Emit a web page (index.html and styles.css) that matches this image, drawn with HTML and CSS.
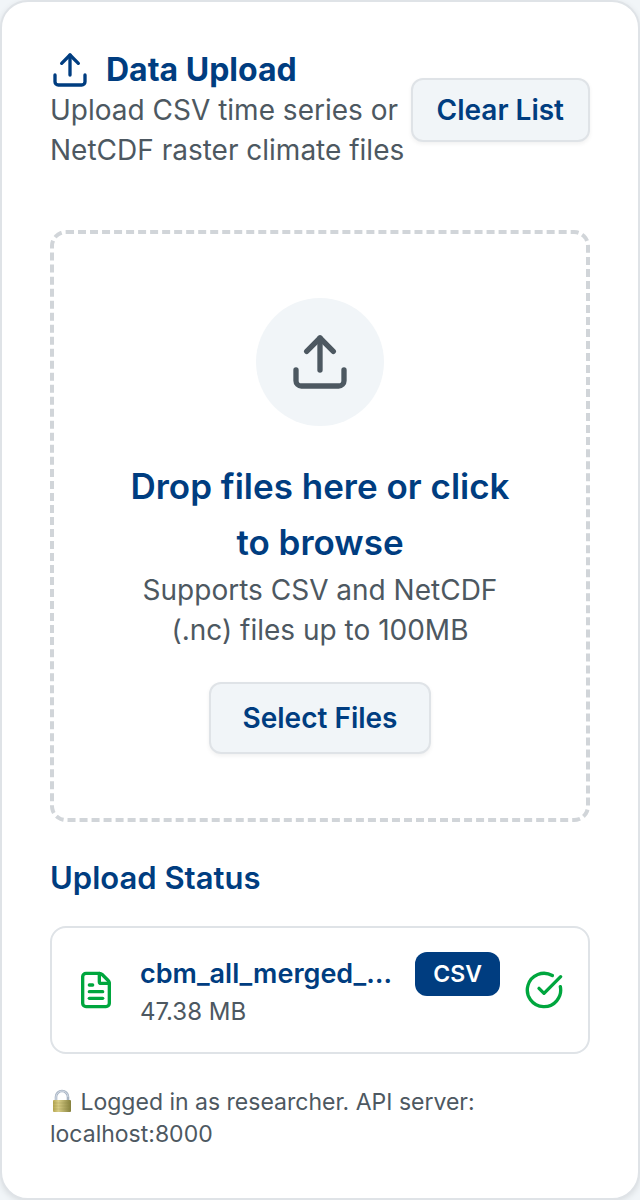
FILE: index.html
```html
<!DOCTYPE html>
<html lang="en">
<head>
<meta charset="utf-8">
<meta name="viewport" content="width=device-width, initial-scale=1">
<title>Data Upload</title>
<link rel="stylesheet" href="styles.css">
</head>
<body>
<main class="card">
  <header class="header">
    <div class="intro">
      <h1 class="title">
        <svg class="icon" viewBox="0 0 24 24" aria-hidden="true"><path d="M12 3v12"/><path d="m17 8-5-5-5 5"/><path d="M21 15v4a2 2 0 0 1-2 2H5a2 2 0 0 1-2-2v-4"/></svg>
        Data Upload
      </h1>
      <p class="text">Upload CSV time series or NetCDF raster climate files</p>
    </div>
    <button class="button" type="button">Clear List</button>
  </header>

  <section class="dropzone">
    <div class="dropzone-icon">
      <svg class="icon icon-large" viewBox="0 0 24 24" aria-hidden="true"><path d="M12 3v12"/><path d="m17 8-5-5-5 5"/><path d="M21 15v4a2 2 0 0 1-2 2H5a2 2 0 0 1-2-2v-4"/></svg>
    </div>
    <h2 class="dropzone-title">Drop files here or click to browse</h2>
    <p class="text dropzone-text">Supports CSV and NetCDF (.nc) files up to 100MB</p>
    <button class="button button-large" type="button">Select Files</button>
  </section>

  <section class="status">
    <h2 class="status-title">Upload Status</h2>
    <ul class="files">
      <li class="file">
        <svg class="icon icon-success" viewBox="0 0 24 24" aria-hidden="true"><path d="M6 22a2 2 0 0 1-2-2V4a2 2 0 0 1 2-2h8a2.4 2.4 0 0 1 1.704.706l3.588 3.588A2.4 2.4 0 0 1 20 8v12a2 2 0 0 1-2 2z"/><path d="M14 2v5a1 1 0 0 0 1 1h5"/><path d="M10 9H8"/><path d="M16 13H8"/><path d="M16 17H8"/></svg>
        <div class="file-info">
          <div class="file-row">
            <span class="file-name">cbm_all_merged_climate.csv</span>
            <span class="badge">CSV</span>
          </div>
          <p class="small">47.38 MB</p>
        </div>
        <svg class="icon icon-success" viewBox="0 0 24 24" role="img" aria-label="Uploaded"><path d="M21.801 10A10 10 0 1 1 17 3.335"/><path d="m9 11 3 3L22 4"/></svg>
      </li>
    </ul>
  </section>

  <footer class="small footer">
    <svg class="lock" viewBox="0 0 24 24" aria-hidden="true">
      <defs>
        <linearGradient id="brass" x1="0" x2="1"><stop offset="0" stop-color="#b5a650"/><stop offset=".3" stop-color="#d8cd86"/><stop offset="1" stop-color="#85803c"/></linearGradient>
      </defs>
      <path d="M6 12V8a6 6 0 0 1 12 0v4" fill="none" stroke="#a9b5c4" stroke-width="2.6"/>
      <path d="M6 12V8a6 6 0 0 1 12 0" fill="none" stroke="#d5dde7" stroke-width="1"/>
      <rect x="3" y="11" width="18" height="12" rx="1" fill="url(#brass)"/>
      <path d="M3 14h18M3 17h18M3 20h18" stroke="#8b8340" stroke-width=".6" opacity=".4"/>
    </svg>
    Logged in as researcher. API server: localhost:8000
  </footer>
</main>
</body>
</html>
```
FILE: styles.css
```css
:root {
  --navy: #003d80;
  --gray: #4d5861;
  --surface: #f1f5f8;
  --line: #dfe3e7;
  --green: #00a63e;
}

* {
  box-sizing: border-box;
  margin: 0;
  padding: 0;
}

body {
  background: var(--surface);
  color: var(--navy);
  font-family: Inter, "Liberation Sans", sans-serif;
}

.card {
  display: flex;
  flex-direction: column;
  gap: 32px;
  padding: 48px;
  border: 2px solid var(--line);
  border-radius: 28px;
  background: #fff;
  box-shadow: 0 2px 6px rgb(0 0 0 / 10%);
}

.icon {
  flex: none;
  width: 40px;
  height: 40px;
  fill: none;
  stroke: currentColor;
  stroke-width: 2;
  stroke-linecap: round;
  stroke-linejoin: round;
}

.icon-large {
  width: 64px;
  height: 64px;
}

.icon-success {
  color: var(--green);
}

.header {
  display: flex;
  align-items: center;
  gap: 4px;
  margin-bottom: 28px;
}

.intro {
  flex: 1;
}

.title {
  display: flex;
  align-items: center;
  gap: 16px;
  font-size: 32px;
  font-weight: 700;
  line-height: 40px;
}

.text {
  color: var(--gray);
  font-size: 28px;
  line-height: 40px;
}

.button {
  flex: none;
  height: 64px;
  padding: 0 24px;
  border: 2px solid var(--line);
  border-radius: 12px;
  background: var(--surface);
  box-shadow: 0 2px 4px rgb(0 0 0 / 6%);
  color: var(--navy);
  font: inherit;
  font-size: 28px;
  font-weight: 600;
}

.button-large {
  height: 72px;
  padding: 0 32px;
}

.dropzone {
  display: flex;
  flex-direction: column;
  align-items: center;
  padding: 64px;
  border: 4px dashed #d1d5d9;
  border-radius: 16px;
  text-align: center;
}

.dropzone-icon {
  display: grid;
  place-items: center;
  width: 128px;
  height: 128px;
  margin-bottom: 32px;
  border-radius: 50%;
  background: var(--surface);
  color: var(--gray);
}

.dropzone-title {
  font-size: 35px;
  font-weight: 600;
  line-height: 56px;
}

.dropzone-text {
  margin-bottom: 32px;
}

.status {
  display: flex;
  flex-direction: column;
  gap: 24px;
}

.status-title {
  font-size: 31px;
  font-weight: 600;
  line-height: 48px;
}

.files {
  list-style: none;
}

.file {
  display: flex;
  align-items: center;
  gap: 24px;
  padding: 24px;
  border: 2px solid var(--line);
  border-radius: 16px;
}

.file-info {
  flex: 1;
  min-width: 0;
}

.file-row {
  display: flex;
  align-items: center;
  gap: 16px;
}

.file-name {
  flex: 1;
  overflow: hidden;
  font-size: 27px;
  font-weight: 600;
  line-height: 40px;
  text-overflow: ellipsis;
  white-space: nowrap;
}

.badge {
  padding: 4px 18px;
  border-radius: 12px;
  background: var(--navy);
  color: #fff;
  font-size: 23px;
  font-weight: 600;
  line-height: 36px;
}

.small {
  color: var(--gray);
  font-size: 24px;
  line-height: 32px;
}

.footer {
  font-size: 23px;
}

.lock {
  width: 24px;
  height: 24px;
  vertical-align: -3px;
}
```
